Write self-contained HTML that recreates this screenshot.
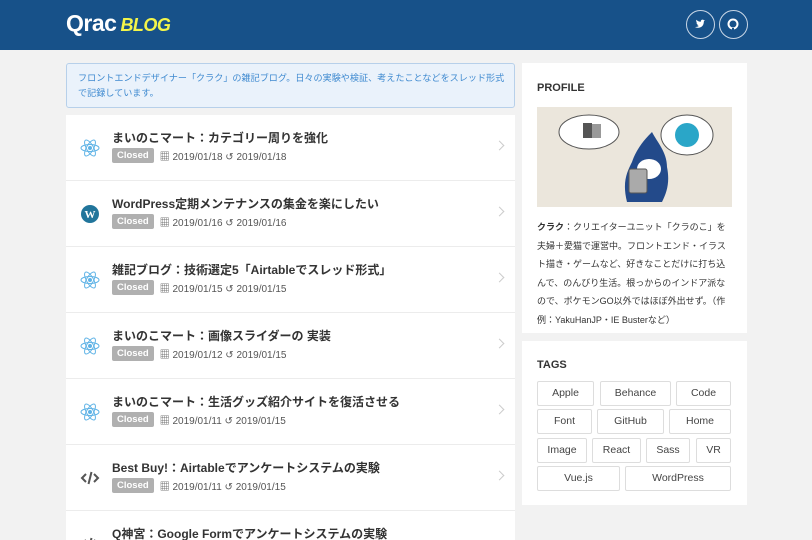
<!DOCTYPE html>
<html><head><meta charset="utf-8"><style>
*{box-sizing:border-box;margin:0;padding:0}
html,body{width:812px;height:540px;overflow:hidden}
body{background:#f2f2f2;font-family:"Liberation Sans","Noto Sans CJK JP",sans-serif;position:relative}
.hdr{position:absolute;left:0;top:0;width:812px;height:50px;background:#175189}
.logo{position:absolute;left:66px;top:10px;color:#fff;font-weight:bold;font-size:23px;letter-spacing:-0.5px}
.logo i{color:#f3f54a;font-size:18px;font-weight:bold;margin-left:4px}
.sb{position:absolute;top:10px;width:29px;height:29px;border:1.5px solid #c8d6e6;border-radius:50%}
.info{position:absolute;left:66px;top:63px;width:449px;height:45px;background:#eaf2fb;border:1px solid #b7d0ea;border-radius:3px;color:#3f8ad0;font-size:9.1px;line-height:15px;padding:7px 11px;white-space:nowrap;overflow:hidden}
.list{position:absolute;left:66px;top:115px;width:449px;height:425px;overflow:hidden;background:#fff}
.row{height:66px;border-bottom:1px solid #ececec;position:relative}
.ic{position:absolute;left:14px;top:23px;width:20px;height:20px}
.t{position:absolute;left:46px;top:14px;font-size:12px;font-weight:bold;color:#333}
.m{position:absolute;left:46px;top:33px;font-size:10px;color:#555;display:flex;align-items:center;gap:4px}
.cl{background:#b0b0b0;color:#fff;font-weight:bold;font-size:9.5px;padding:2px 5px;border-radius:2px;margin-right:2px}
.ar{position:absolute;right:12px;top:27px;width:7px;height:7px;border-right:1.5px solid #ccc;border-top:1.5px solid #ccc;transform:rotate(45deg)}
.card{position:absolute;left:522px;width:225px;background:#fff;overflow:hidden}
.h{position:absolute;left:15px;font-size:11px;font-weight:bold;color:#333}
.tag{position:absolute;height:25px;border:1px solid #ddd;font-size:10.5px;color:#444;text-align:center;line-height:23px;border-radius:2px}
</style></head><body>
<div class="hdr"><div class="logo">Qrac<i>BLOG</i></div>
<div class="sb" style="left:686px"><svg width="26" height="26" viewBox="0 0 26 26"><path d="M8 16c3 1.5 7 1 8.5-3l.5-3 1.2-1-1.3.2c-.8-.9-2.4-.9-3 .5l-.1 1c-1.8 0-3.3-.8-4.4-2-.6 1.2 0 2.4.9 3l-.9-.2c0 1 .8 1.8 1.6 2l-.8.1c.3.8 1 1.3 1.8 1.3-1 .8-2.4 1.2-3.8 1.1z" fill="#fff"/></svg></div>
<div class="sb" style="left:719px"><svg width="26" height="26" viewBox="0 0 26 26"><circle cx="13" cy="13" r="4.5" fill="none" stroke="#fff" stroke-width="2"/><path d="M12 17h2v2h-2z" fill="#175189"/></svg></div>
</div>
<div class="info">フロントエンドデザイナー「クラク」の雑記ブログ。日々の実験や検証、考えたことなどをスレッド形式<br>で記録しています。</div>
<div class="list">
<div class="row"><svg class="ic" viewBox="0 0 20 20" fill="none" stroke="#5fb3e6" stroke-width="1"><ellipse cx="10" cy="10" rx="9" ry="3.5"/><ellipse cx="10" cy="10" rx="9" ry="3.5" transform="rotate(60 10 10)"/><ellipse cx="10" cy="10" rx="9" ry="3.5" transform="rotate(120 10 10)"/><circle cx="10" cy="10" r="1.5" fill="#5fb3e6"/></svg><div class="t">まいのこマート：カテゴリー周りを強化</div><div class="m"><span class="cl">Closed</span>▦ 2019/01/18 ↺ 2019/01/18</div><div class="ar"></div></div>
<div class="row"><svg class="ic" viewBox="0 0 20 20"><circle cx="10" cy="10" r="9" fill="#21759b"/><text x="10" y="14" font-size="11" font-weight="bold" fill="#fff" text-anchor="middle" font-family="Liberation Serif">W</text></svg><div class="t">WordPress定期メンテナンスの集金を楽にしたい</div><div class="m"><span class="cl">Closed</span>▦ 2019/01/16 ↺ 2019/01/16</div><div class="ar"></div></div>
<div class="row"><svg class="ic" viewBox="0 0 20 20" fill="none" stroke="#5fb3e6" stroke-width="1"><ellipse cx="10" cy="10" rx="9" ry="3.5"/><ellipse cx="10" cy="10" rx="9" ry="3.5" transform="rotate(60 10 10)"/><ellipse cx="10" cy="10" rx="9" ry="3.5" transform="rotate(120 10 10)"/><circle cx="10" cy="10" r="1.5" fill="#5fb3e6"/></svg><div class="t">雑記ブログ：技術選定5「Airtableでスレッド形式」</div><div class="m"><span class="cl">Closed</span>▦ 2019/01/15 ↺ 2019/01/15</div><div class="ar"></div></div>
<div class="row"><svg class="ic" viewBox="0 0 20 20" fill="none" stroke="#5fb3e6" stroke-width="1"><ellipse cx="10" cy="10" rx="9" ry="3.5"/><ellipse cx="10" cy="10" rx="9" ry="3.5" transform="rotate(60 10 10)"/><ellipse cx="10" cy="10" rx="9" ry="3.5" transform="rotate(120 10 10)"/><circle cx="10" cy="10" r="1.5" fill="#5fb3e6"/></svg><div class="t">まいのこマート：画像スライダーの 実装</div><div class="m"><span class="cl">Closed</span>▦ 2019/01/12 ↺ 2019/01/15</div><div class="ar"></div></div>
<div class="row"><svg class="ic" viewBox="0 0 20 20" fill="none" stroke="#5fb3e6" stroke-width="1"><ellipse cx="10" cy="10" rx="9" ry="3.5"/><ellipse cx="10" cy="10" rx="9" ry="3.5" transform="rotate(60 10 10)"/><ellipse cx="10" cy="10" rx="9" ry="3.5" transform="rotate(120 10 10)"/><circle cx="10" cy="10" r="1.5" fill="#5fb3e6"/></svg><div class="t">まいのこマート：生活グッズ紹介サイトを復活させる</div><div class="m"><span class="cl">Closed</span>▦ 2019/01/11 ↺ 2019/01/15</div><div class="ar"></div></div>
<div class="row"><svg class="ic" viewBox="0 0 20 20" fill="none" stroke="#555" stroke-width="2"><path d="M6 6l-4 4 4 4M14 6l4 4-4 4M11.5 4l-3 12"/></svg><div class="t">Best Buy!：Airtableでアンケートシステムの実験</div><div class="m"><span class="cl">Closed</span>▦ 2019/01/11 ↺ 2019/01/15</div><div class="ar"></div></div>
<div class="row"><svg class="ic" viewBox="0 0 20 20" fill="none" stroke="#555" stroke-width="2"><path d="M6 6l-4 4 4 4M14 6l4 4-4 4M11.5 4l-3 12"/></svg><div class="t">Q神宮：Google Formでアンケートシステムの実験</div></div>
</div>
<div class="card" style="top:63px;height:270px">
<div class="h" style="top:19px">PROFILE</div>
<svg style="position:absolute;left:15px;top:44px" width="195" height="100" viewBox="0 0 195 100"><rect width="195" height="100" fill="#ebe6dc"/><ellipse cx="52" cy="25" rx="30" ry="17" fill="#fff" stroke="#555"/><rect x="46" y="16" width="9" height="15" fill="#555"/><rect x="55" y="17" width="9" height="14" fill="#999"/><ellipse cx="150" cy="28" rx="26" ry="20" fill="#fff" stroke="#555"/><circle cx="150" cy="28" r="12" fill="#2aa6c8"/><path d="M90 95c-5-20 0-30 5-40 5-15 15-25 20-30 5 10 15 20 15 35 3 15 0 25-5 35z" fill="#234a8a"/><ellipse cx="112" cy="62" rx="12" ry="10" fill="#fff"/><rect x="92" y="62" width="18" height="24" rx="2" fill="#aaa" stroke="#555"/></svg>
<div style="position:absolute;left:15px;top:155px;width:205px;font-size:9px;line-height:18.6px;color:#333;white-space:nowrap"><b>クラク</b>：クリエイターユニット「クラのこ」を<br>夫婦＋愛猫で運営中。フロントエンド・イラス<br>ト描き・ゲームなど、好きなことだけに打ち込<br>んで、のんびり生活。根っからのインドア派な<br>ので、ポケモンGO以外ではほぼ外出せず。（作<br>例：YakuHanJP・IE Busterなど）</div>
</div>
<div class="card" style="top:341px;height:164px">
<div class="h" style="top:18px">TAGS</div>
</div>
<div class="tag" style="left:537px;top:381px;width:57px">Apple</div>
<div class="tag" style="left:600px;top:381px;width:71px">Behance</div>
<div class="tag" style="left:676px;top:381px;width:55px">Code</div>
<div class="tag" style="left:537px;top:409px;width:55px">Font</div>
<div class="tag" style="left:597px;top:409px;width:67px">GitHub</div>
<div class="tag" style="left:669px;top:409px;width:62px">Home</div>
<div class="tag" style="left:537px;top:438px;width:50px">Image</div>
<div class="tag" style="left:592px;top:438px;width:49px">React</div>
<div class="tag" style="left:646px;top:438px;width:44px">Sass</div>
<div class="tag" style="left:696px;top:438px;width:35px">VR</div>
<div class="tag" style="left:537px;top:466px;width:83px">Vue.js</div>
<div class="tag" style="left:625px;top:466px;width:106px">WordPress</div>
</body></html>
